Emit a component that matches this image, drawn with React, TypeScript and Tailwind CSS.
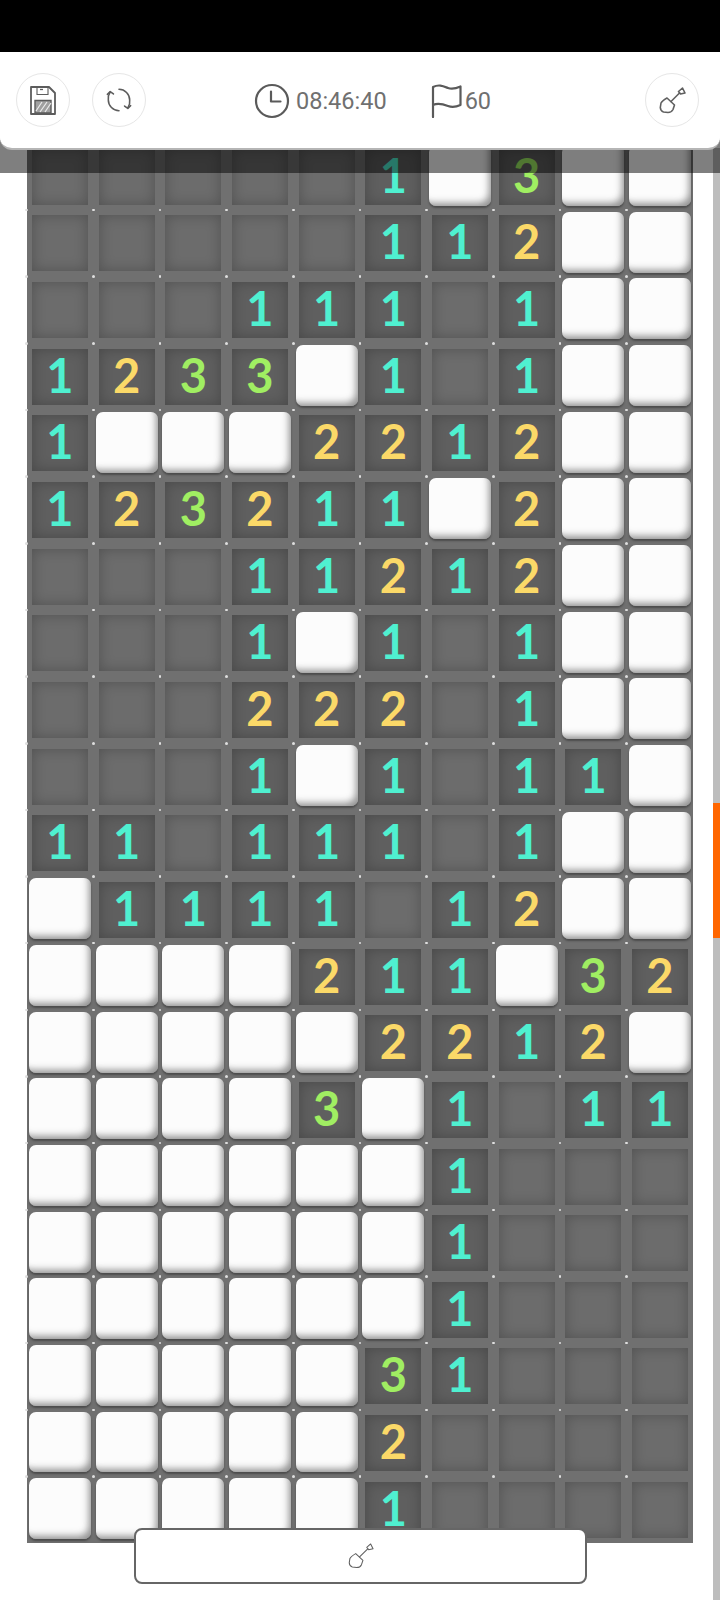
import React from "react";

const rows = [
  "·····1#3##",
  "·····112##",
  "···111·1##",
  "1233#1·1##",
  "1###2212##",
  "123211#2##",
  "···11212##",
  "···1#1·1##",
  "···222·1##",
  "···1#1·11#",
  "11·111·1##",
  "#1111·12##",
  "####211#32",
  "#####2212#",
  "####3#1·11",
  "######1···",
  "######1···",
  "######1···",
  "#####31···",
  "#####2····",
  "#####1····",
];

function Shovel({ className, sw }: { className: string; sw: number }) {
  return (
    <svg viewBox="0 0 27 27" fill="none" stroke="#606060" strokeWidth={sw} strokeLinejoin="round" strokeLinecap="round" className={className}>
      <path d="M8 11 L15.5 18 L14 22.5 Q12.5 25.500 9 25.500 L4.500 25 Q1.500 24 1.300 20.500 L2 16 Q3 14 8 11 Z" />
      <path d="M12 14.500 L20.500 6" />
      <path d="M19.500 4.500 L23.500 1 L26 6 L21.500 7 Z" />
    </svg>
  );
}

function SaveIcon() {
  return (
    <svg viewBox="0 0 26 29" fill="none" stroke="#5c5c5c" className="w-[26px] h-[29px]">
      <path d="M1 1 H19 L25 7 V28 H1 Z" strokeWidth="1.800" strokeLinejoin="round" />
      <path d="M7 1.500 V8.500 H18 V1.500" strokeWidth="1.100" />
      <path d="M10 3.500 H13" strokeWidth="1.300" />
      <path d="M5 14.500 H21 V27 H5 Z" fill="#a0a0a0" strokeWidth="1.400" />
      <path d="M6 25 L12 16 M10 26 L17 16 M15 26 L21 17" stroke="#ececec" strokeWidth="1.200" />
    </svg>
  );
}

function RefreshIcon() {
  return (
    <svg viewBox="0 0 28 28" fill="none" stroke="#5c5c5c" strokeWidth="1.700" strokeLinecap="round" strokeLinejoin="round" className="w-[26px] h-[26px]">
      <path d="M4.500 5.500 A12 12 0 0 0 2.500 14 A11.500 11.500 0 0 0 14 25.500" />
      <path d="M14 2.500 A11.500 11.500 0 0 1 25.500 14 A12 12 0 0 1 23.500 22.500" />
      <path d="M1.500 8 L4.500 5 L8 7.500" />
      <path d="M20 20.500 L23.500 23 L26.500 20" />
    </svg>
  );
}

function ClockIcon() {
  return (
    <svg viewBox="0 0 36 36" fill="none" stroke="#5a5a5a" strokeWidth="2.200" strokeLinecap="round" strokeLinejoin="round" className="w-[36px] h-[36px]">
      <circle cx="18" cy="18" r="16" />
      <path d="M17 8.500 V18.500 H26.500" />
    </svg>
  );
}

function FlagIcon() {
  return (
    <svg viewBox="0 0 31 34" fill="none" stroke="#5a5a5a" strokeWidth="2.200" strokeLinecap="round" strokeLinejoin="round" className="w-[31px] h-[34px]">
      <path d="M2 33 V3 C8 0 12 2 17 4 C21 5.500 25 4.500 29.500 2.500 V21 C25 23 21 23.500 17 22 C12 20 7 18.500 2 21" />
    </svg>
  );
}

function Digit({ v }: { v: string }) {
  const color = v === "1" ? "text-[#4ff0d0]" : v === "2" ? "text-[#fbd968]" : "text-[#a0ee62]";
  return (
    <span className={`-mt-[3px] font-['Lato',sans-serif] font-bold text-[47px] leading-none ${color}`}>{v}</span>
  );
}

function Cell({ v }: { v: string }) {
  return (
    <div className="relative bg-[#707070]">
      <span className="absolute -left-[1.25px] -top-[1.25px] z-[1] w-[2.5px] h-[2.5px] rounded-full bg-[#dedede]" />
      {v === "#" ? (
        <div className="absolute left-[2.3px] right-[2.3px] top-[1.7px] bottom-[4px] rounded-[7px] bg-[#fcfcfc] shadow-[inset_-5px_-6px_7px_-3px_rgba(90,90,90,0.65),0_2px_2px_rgba(40,40,40,0.5)]" />
      ) : (
        <div
          className={
            "absolute inset-[5.33px] flex items-center justify-center " +
            (v === "·"
              ? "bg-[#6c6c6c] shadow-[inset_0_0_14px_rgba(0,0,0,0.25)]"
              : "bg-[#5f5f5f] shadow-[inset_0_0_14px_rgba(0,0,0,0.25)]")
          }
        >
          {v !== "·" && <Digit v={v} />}
        </div>
      )}
    </div>
  );
}

export default function App() {
  return (
    <div className="relative w-[720px] h-[1600px] overflow-hidden bg-white font-['Roboto',sans-serif]">
      <div className="relative z-30 h-[52px] bg-black" />
      <header className="relative z-20 h-[98px] bg-white rounded-b-[12px] border-b-2 border-[#b5b5b5] flex items-center justify-between pl-[16px] pr-[21px]">
        <div className="flex gap-[22px]">
          <button className="w-[54px] h-[54px] rounded-full border border-[#e6e6e6] flex items-center justify-center">
            <SaveIcon />
          </button>
          <button className="w-[54px] h-[54px] rounded-full border border-[#e6e6e6] flex items-center justify-center">
            <RefreshIcon />
          </button>
        </div>
        <div className="absolute left-[254px] top-[31px] flex items-center gap-[6px] text-[23.5px] leading-none text-[#707070]">
          <ClockIcon />
          <span className="mt-[2px]">08:46:40</span>
          <span className="ml-[38px]"><FlagIcon /></span>
          <span className="-ml-[3px] mt-[2px]">60</span>
        </div>
        <button className="w-[54px] h-[54px] rounded-full border border-[#e6e6e6] flex items-center justify-center">
          <Shovel className="w-[27px] h-[27px]" sw={1.6} />
        </button>
      </header>

      <div className="absolute left-0 right-0 top-[140px] h-[33px] z-10 bg-black/50" />

      <main className="-mt-[6.67px] ml-[26.67px] grid grid-cols-[repeat(10,66.667px)] auto-rows-[66.667px] w-[666.67px]">
        {rows.flatMap((row, r) =>
          Array.from(row).map((v, c) => <Cell key={`${r}-${c}`} v={v} />)
        )}
      </main>

      <div className="absolute right-0 top-[148px] bottom-0 w-[7px] bg-[#bdbdbd]">
        <div className="absolute left-0 right-0 top-[655px] h-[135px] bg-[#ff6600]" />
      </div>

      <button className="absolute z-20 left-[134px] top-[1528px] w-[453px] h-[56px] rounded-[8px] border-2 border-[#666] bg-white flex items-center justify-center">
        <Shovel className="w-[26px] h-[26px]" sw={1.1} />
      </button>
    </div>
  );
}
